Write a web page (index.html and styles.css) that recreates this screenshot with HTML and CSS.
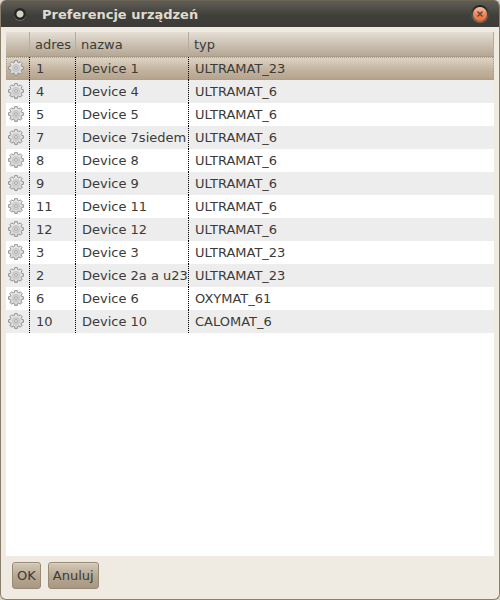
FILE: index.html
```html
<!DOCTYPE html>
<html lang="pl">
<head>
<meta charset="utf-8">
<title>Preferencje urządzeń</title>
<link rel="stylesheet" href="styles.css">
</head>
<body>
<svg class="defs" aria-hidden="true">
  <defs>
    <linearGradient id="metal" x1="0" y1="0" x2="0" y2="1">
      <stop offset="0" stop-color="#ebebeb"/>
      <stop offset="1" stop-color="#d4d4d4"/>
    </linearGradient>
    <symbol id="gear" viewBox="0 0 16 16">
      <path d="M6.4 2.4L6.7.6H9.3L9.6 2.4L10.8 2.9L12.3 1.8L14.2 3.7L13.1 5.2L13.6 6.4L15.4 6.7V9.3L13.6 9.6L13.1 10.8L14.2 12.3L12.3 14.2L10.8 13.1L9.6 13.6L9.3 15.4H6.7L6.4 13.6L5.2 13.1L3.7 14.2L1.8 12.3L2.9 10.8L2.4 9.6L.6 9.3V6.7L2.4 6.4L2.9 5.2L1.8 3.7L3.7 1.8L5.2 2.9Z" fill="url(#metal)" stroke="#929292" stroke-linejoin="round"/>
      <circle cx="8" cy="8" r="3.500" fill="#d6d6d6" stroke="#c2c2c2"/>
      <circle cx="8" cy="8" r="1.500" fill="#e6e6e6" stroke="#aaa"/>
    </symbol>
  </defs>
</svg>
<main class="window">
  <header class="titlebar">
    <button class="menu" type="button" aria-label="Menu okna"></button>
    <h1 class="title">Preferencje urządzeń</h1>
    <button class="close" type="button" aria-label="Zamknij">
      <svg viewBox="0 0 18 18" aria-hidden="true">
        <defs>
          <linearGradient id="ring" x1="0" y1="0" x2="0" y2="1">
            <stop offset="0" stop-color="#1c1b19"/>
            <stop offset="1" stop-color="#77746c"/>
          </linearGradient>
          <linearGradient id="orange" x1="0" y1="0" x2="0" y2="1">
            <stop offset="0" stop-color="#fac0a5"/>
            <stop offset=".5" stop-color="#f28660"/>
            <stop offset="1" stop-color="#f96c2c"/>
          </linearGradient>
        </defs>
        <circle cx="9" cy="9" r="9" fill="url(#ring)"/>
        <circle cx="9" cy="9" r="7" fill="url(#orange)"/>
        <path d="M6.500 6.500l5 5m0-5l-5 5" stroke="#5b4a40" stroke-width="1.500"/>
      </svg>
    </button>
  </header>
  <section class="list">
    <table class="devices">
      <colgroup><col class="c-icon"><col class="c-address"><col class="c-name"><col></colgroup>
      <thead>
        <tr><th></th><th>adres</th><th>nazwa</th><th>typ</th></tr>
      </thead>
      <tbody>
        <tr class="selected"><td><svg class="gear"><use href="#gear"/></svg></td><td>1</td><td>Device 1</td><td>ULTRAMAT_23</td></tr>
        <tr><td><svg class="gear"><use href="#gear"/></svg></td><td>4</td><td>Device 4</td><td>ULTRAMAT_6</td></tr>
        <tr><td><svg class="gear"><use href="#gear"/></svg></td><td>5</td><td>Device 5</td><td>ULTRAMAT_6</td></tr>
        <tr><td><svg class="gear"><use href="#gear"/></svg></td><td>7</td><td>Device 7siedem</td><td>ULTRAMAT_6</td></tr>
        <tr><td><svg class="gear"><use href="#gear"/></svg></td><td>8</td><td>Device 8</td><td>ULTRAMAT_6</td></tr>
        <tr><td><svg class="gear"><use href="#gear"/></svg></td><td>9</td><td>Device 9</td><td>ULTRAMAT_6</td></tr>
        <tr><td><svg class="gear"><use href="#gear"/></svg></td><td>11</td><td>Device 11</td><td>ULTRAMAT_6</td></tr>
        <tr><td><svg class="gear"><use href="#gear"/></svg></td><td>12</td><td>Device 12</td><td>ULTRAMAT_6</td></tr>
        <tr><td><svg class="gear"><use href="#gear"/></svg></td><td>3</td><td>Device 3</td><td>ULTRAMAT_23</td></tr>
        <tr><td><svg class="gear"><use href="#gear"/></svg></td><td>2</td><td>Device 2a a u23</td><td>ULTRAMAT_23</td></tr>
        <tr><td><svg class="gear"><use href="#gear"/></svg></td><td>6</td><td>Device 6</td><td>OXYMAT_61</td></tr>
        <tr><td><svg class="gear"><use href="#gear"/></svg></td><td>10</td><td>Device 10</td><td>CALOMAT_6</td></tr>
      </tbody>
    </table>
  </section>
  <footer class="actions">
    <button class="btn" type="button">OK</button>
    <button class="btn" type="button">Anuluj</button>
  </footer>
</main>
</body>
</html>
```
FILE: styles.css
```css
* { box-sizing: border-box; }

body {
  margin: 0;
  background: #d9d5cd;
  color: #3c3b37;
  font: 13px/21px "DejaVu Sans", sans-serif;
}

.defs { position: absolute; width: 0; height: 0; }

.window {
  display: flex;
  flex-direction: column;
  min-height: 100vh;
  background: #efebe3;
  border: solid #8b7e6b;
  border-width: 0 1px 1px;
  border-radius: 6px;
  overflow: hidden;
}

.titlebar {
  display: flex;
  align-items: center;
  height: 27px;
  padding: 0 10px 0 11px;
  background: linear-gradient(#5f5d55, #403f3a 55%, #3c3b37);
  border-top: 1px solid #6b6455;
}

.menu {
  width: 12px;
  height: 12px;
  margin: 0 16px 0 2px;
  padding: 0;
  border: 0;
  border-radius: 50%;
  background: radial-gradient(circle, #d5d1c8 3px, #282724 4px);
  box-shadow: 0 1px 0 #77746c;
}

.title {
  flex: 1;
  margin: 0;
  font-size: 13px;
  color: #dfdbd2;
}

.close {
  width: 18px;
  height: 18px;
  padding: 0;
  border: 0;
  background: none;
}

.close svg { display: block; }

.list {
  flex: 1;
  margin: 5px 5px 0;
  background: #fff;
}

.devices {
  width: 100%;
  table-layout: fixed;
  border-collapse: separate;
  border-spacing: 0;
}

.c-icon { width: 24px; }
.c-address { width: 46px; }
.c-name { width: 113px; }

thead tr { background: linear-gradient(#e6dfd5, #c8bdae 55%, #b3a592); }

th {
  height: 25px;
  padding: 0 0 0 5px;
  border-right: 1px solid #b8ab9a;
  border-bottom: 1px solid #a99b87;
  font-weight: normal;
  text-align: left;
}

td {
  height: 23px;
  padding: 0 0 0 6px;
  white-space: nowrap;
  overflow: hidden;
}

td:first-child { padding: 0 0 1px 2px; }

td:not(:last-child) {
  background: repeating-linear-gradient(#000 0 1px, transparent 1px 2px) right / 1px 100% no-repeat;
}

tbody tr:nth-child(even) { background: #ededed; }

tbody .selected {
  background:
    repeating-linear-gradient(90deg, #fb7a66 0 1px, transparent 1px 2px) top / 100% 1px no-repeat,
    repeating-linear-gradient(90deg, #fb7a66 0 1px, transparent 1px 2px) bottom / 100% 1px no-repeat,
    repeating-linear-gradient(#fb7a66 0 1px, transparent 1px 2px) left / 1px 100% no-repeat,
    repeating-linear-gradient(#fb7a66 0 1px, transparent 1px 2px) right / 1px 100% no-repeat,
    linear-gradient(#e0d6c7, #c6b7a2 50%, #b3a18b);
}

.gear {
  display: block;
  width: 16px;
  height: 16px;
}

.actions {
  display: flex;
  gap: 7px;
  padding: 6px 11px 10px;
}

.btn {
  height: 27px;
  padding: 0 4px;
  border: 1px solid #978974;
  border-radius: 3px;
  background: linear-gradient(#d3c8b8, #b8a993 50%, #a89780);
  box-shadow: inset 0 1px 0 #ddd3c5;
  color: inherit;
  font: inherit;
}
```
